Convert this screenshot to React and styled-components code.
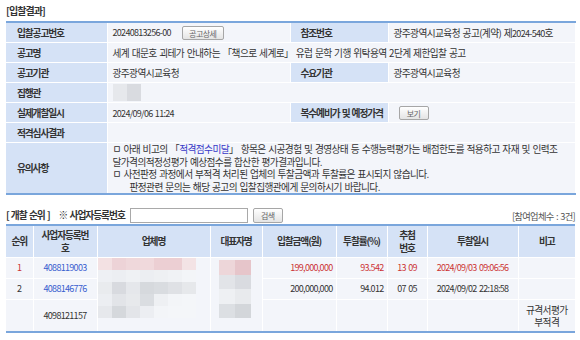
import React from "react";
import styled, { createGlobalStyle } from "styled-components";

const GlobalStyle = createGlobalStyle`
    html, body {
        margin: 0;
        padding: 0;
        background: #ffffff;
    }
    body {
        font-family: "Noto Sans CJK KR", "Noto Sans", sans-serif;
        font-size: 9.7px;
        letter-spacing: -0.6px;
        word-spacing: 1px;
        color: #333;
    }
`;

// mosaic colours used to hide names (same as the blurred blocks in the page)
const nameMosaic = [
    ["#f3e1e3", "#edd3d7", "#efd8db", "#f0d9dc", "#eccfd3", "#eccfd3", "#f3e3e5"],
    ["#eef0f4", "#eceef2", "#eff1f4", "#eceef2", "#eef0f3", "#f0f2f5", "#f3f5f8"],
    ["#e9ebee", "#d8dadf", "#e5e7eb", "#d6d9dd", "#d9dce0", "#dfe1e5", "#e6e8eb"],
    ["#eceef2", "#e2e4e8", "#e7e9ec", "#dadde1", "#eef0f3", "#f3f5f8", "#f4f6f9"],
    ["#e6e8ec", "#d5d8dc", "#e3e5e9", "#eceef2", "#f3f5f8", "#f4f6f9", "#f4f6f9"],
];

const repMosaic = [
    ["#edd6d9", "#e6c5ca"],
    ["#e2e4e8", "#d9dbe0"],
    ["#eef0f3", "#e8eaed"],
    ["#dcdfe3", "#d3d6da"],
];

const bids = [
    { rank: "1", bizNo: "4088119003", link: true, amount: "199,000,000", rate: "93.542", draw: "13 09", date: "2024/09/03 09:06:56", note: "", hot: true },
    { rank: "2", bizNo: "4088146776", link: true, amount: "200,000,000", rate: "94.012", draw: "07 05", date: "2024/09/02 22:18:58", note: "" },
    { rank: "", bizNo: "4098121157", link: false, amount: "", rate: "", draw: "", date: "", note: "규격서평가\n부적격", tall: true },
];

const Mosaic = ({ data, cell, rowH }) => (
    <MosaicGrid $cols={data[0].length} $cell={cell} $rowH={rowH}>
        {data.flat().map((c, i) => (
            <MosaicCell key={i} $c={c} />
        ))}
    </MosaicGrid>
);

const App = () => {
    return (
        <Page>
            <GlobalStyle />
            <Title>[입찰결과]</Title>

            {/* 입찰결과 정보 */}
            <InfoTable>
                <colgroup>
                    <col style={{ width: 101 }} />
                    <col style={{ width: 183 }} />
                    <col style={{ width: 98 }} />
                    <col style={{ width: 187 }} />
                </colgroup>
                <tbody>
                    <tr>
                        <Th>입찰공고번호</Th>
                        <Td>
                            <Num>20240813256-00</Num>
                            <SmallButton $w={42} $ml={11}>공고상세</SmallButton>
                        </Td>
                        <Th $pl={10}>참조번호</Th>
                        <Td>광주광역시교육청 공고(계약) 제<Num>2024-540</Num>호</Td>
                    </tr>
                    <tr>
                        <Th>공고명</Th>
                        <Td colSpan={3}>
                            세계 대문호 괴테가 안내하는 「책으로 세계로」 유럽 문학 기행 위탁용역 2단계 제한입찰 공고
                        </Td>
                    </tr>
                    <tr>
                        <Th>공고기관</Th>
                        <Td>광주광역시교육청</Td>
                        <Th $pl={10}>수요기관</Th>
                        <Td>광주광역시교육청</Td>
                    </tr>
                    <tr>
                        <Th>집행관</Th>
                        <Td colSpan={3}>
                            <Mosaic data={[["#e6e8ec", "#d9dbe0"]]} cell={14} rowH={17} />
                        </Td>
                    </tr>
                    <tr>
                        <Th>실제개찰일시</Th>
                        <Td><Num>2024/09/06 11:24</Num></Td>
                        <Th $pl={10}>복수예비가 및 예정가격</Th>
                        <Td>
                            <SmallButton $w={30} $ml={5}>보기</SmallButton>
                        </Td>
                    </tr>
                    <tr>
                        <Th>적격심사결과</Th>
                        <Td colSpan={3}></Td>
                    </tr>
                    <tr>
                        <Th $h={50}>유의사항</Th>
                        <Td colSpan={3}>
                            <Notice>
                                <div>ㅁ 아래 비고의 「<Highlight>적격점수미달</Highlight>」 항목은 시공경험 및 경영상태 등 수행능력평가는 배점한도를 적용하고 자재 및 인력조</div>
                                <div>달가격의적정성평가 예상점수를 합산한 평가결과입니다.</div>
                                <div>ㅁ 사전판정 과정에서 부적격 처리된 업체의 투찰금액과 투찰률은 표시되지 않습니다.</div>
                                <Indent>판정관련 문의는 해당 공고의 입찰집행관에게 문의하시기 바랍니다.</Indent>
                            </Notice>
                        </Td>
                    </tr>
                </tbody>
            </InfoTable>

            {/* 개찰 순위 검색줄 */}
            <SearchBar>
                <SectionLabel>[ 개찰 순위 ]</SectionLabel>
                <SectionLabel $ml={9}>※ 사업자등록번호</SectionLabel>
                <SearchInput />
                <SmallButton $w={30} $ml={5} $h={15}>검색</SmallButton>
                <Count>[참여업체수 : 3건]</Count>
            </SearchBar>

            <RankTable>
                <colgroup>
                    <col style={{ width: 27 }} />
                    <col style={{ width: 64 }} />
                    <col style={{ width: 113 }} />
                    <col style={{ width: 52 }} />
                    <col style={{ width: 74 }} />
                    <col style={{ width: 51 }} />
                    <col style={{ width: 40 }} />
                    <col style={{ width: 91 }} />
                    <col style={{ width: 57 }} />
                </colgroup>
                <thead>
                    <tr>
                        <HeadCell>순위</HeadCell>
                        <HeadCell>사업자등록번<br />호</HeadCell>
                        <HeadCell>업체명</HeadCell>
                        <HeadCell>대표자명</HeadCell>
                        <HeadCell>입찰금액(원)</HeadCell>
                        <HeadCell>투찰률(%)</HeadCell>
                        <HeadCell>추첨<br />번호</HeadCell>
                        <HeadCell>투찰일시</HeadCell>
                        <HeadCell>비고</HeadCell>
                    </tr>
                </thead>
                <tbody>
                    {bids.map((b, i) => (
                        <tr key={i}>
                            <Cell $num $hot={b.hot} $h={b.tall ? 31 : 20}>{b.rank}</Cell>
                            <Cell $num $hot={b.hot}>
                                {b.link ? <BizLink>{b.bizNo}</BizLink> : b.bizNo}
                            </Cell>
                            {i === 0 && (
                                <MosaicCellTd rowSpan={3}>
                                    <Mosaic data={nameMosaic} cell={14} rowH={12} />
                                </MosaicCellTd>
                            )}
                            {i === 0 && (
                                <MosaicCellTd rowSpan={3} $center>
                                    <Mosaic data={repMosaic} cell={16} rowH={14.5} />
                                </MosaicCellTd>
                            )}
                            <Cell $num $hot={b.hot} $align="right">{b.amount}</Cell>
                            <Cell $num $hot={b.hot} $align="right">{b.rate}</Cell>
                            <Cell $num $hot={b.hot}>{b.draw}</Cell>
                            <Cell $num $hot={b.hot}>{b.date}</Cell>
                            <Cell $pre>{b.note}</Cell>
                        </tr>
                    ))}
                </tbody>
            </RankTable>
        </Page>
    );
};

export default App;

const Page = styled.div`
    width: 569px;
    padding: 0 5px 0 6px;
`;

const Title = styled.div`
    height: 20px;
    padding-top: 4px;
    box-sizing: border-box;
    font-weight: bold;
    font-size: 10px;
    letter-spacing: -0.9px;
    line-height: 13px;
    color: #333;
`;

const Num = styled.span`
    font-size: 9px;
    letter-spacing: -0.7px;
`;

const InfoTable = styled.table`
    width: 569px;
    table-layout: fixed;
    border-collapse: collapse;
    border-top: 2px solid #7aa6dc;
    border-bottom: 2px solid #7aa6dc;
    margin-top: 1px;
`;

const Th = styled.th`
    height: ${(p) => p.$h || 19}px;
    padding: 0 0 0 ${(p) => p.$pl || 11}px;
    background: #d5e2f6;
    border-bottom: 1px solid #ffffff;
    border-right: 1px solid #ffffff;
    text-align: left;
    font-weight: bold;
    letter-spacing: -1.1px;
    color: #333;
    white-space: nowrap;
`;

const Td = styled.td`
    padding: 0 4px 0 5px;
    background: #f3f5fa;
    border-bottom: 1px solid #ffffff;
    border-right: 1px solid #ffffff;
    color: #333;
    white-space: nowrap;
    vertical-align: middle;
`;

const SmallButton = styled.button`
    width: ${(p) => p.$w}px;
    height: ${(p) => p.$h || 14}px;
    margin-left: ${(p) => p.$ml || 0}px;
    padding: 0;
    font-family: inherit;
    font-size: 8px;
    letter-spacing: -0.5px;
    color: #666;
    background: linear-gradient(#ffffff, #e4e4e4);
    border: 1px solid #a6a6a6;
    border-radius: 2px;
    vertical-align: middle;
`;

const Notice = styled.div`
    line-height: 12.5px;
`;

const Indent = styled.div`
    padding-left: 17px;
`;

const Highlight = styled.span`
    color: #3838c8;
`;

const SearchBar = styled.div`
    display: flex;
    align-items: center;
    height: 16px;
    margin-top: 12px;
    margin-bottom: 1px;
`;

const SectionLabel = styled.span`
    margin-left: ${(p) => p.$ml || 0}px;
    font-weight: bold;
    letter-spacing: -1px;
    color: #333;
`;

const SearchInput = styled.input`
    width: 118px;
    height: 15px;
    box-sizing: border-box;
    margin-left: 5px;
    border: 1px solid #a9a9a9;
    background: #fff;
    padding: 0;
`;

const Count = styled.span`
    margin-left: auto;
    align-self: flex-end;
    color: #555;
    letter-spacing: -0.7px;
    font-size: 9.3px;
`;

const RankTable = styled.table`
    width: 569px;
    table-layout: fixed;
    border-collapse: collapse;
    border-top: 2px solid #7aa6dc;
    border-bottom: 2px solid #7aa6dc;
`;

const HeadCell = styled.th`
    height: 31px;
    padding: 0;
    background: #d5e2f6;
    border-right: 1px solid #ffffff;
    border-bottom: 1px solid #ffffff;
    font-weight: bold;
    letter-spacing: -1.1px;
    line-height: 13px;
    color: #333;
    text-align: center;
    &:last-child {
        border-right: none;
    }
`;

const Cell = styled.td`
    height: ${(p) => p.$h || 19}px;
    padding: 0 3px;
    background: #f3f5fa;
    border-right: 1px solid #ffffff;
    border-bottom: 1px solid #ffffff;
    text-align: ${(p) => p.$align || "center"};
    color: ${(p) => (p.$hot ? "#cc3333" : "#333")};
    white-space: ${(p) => (p.$pre ? "pre-line" : "nowrap")};
    font-size: ${(p) => (p.$num ? "9px" : "inherit")};
    letter-spacing: ${(p) => (p.$num ? "-0.7px" : "inherit")};
    line-height: 12px;
    &:last-child {
        border-right: none;
    }
`;

const MosaicCellTd = styled.td`
    padding: ${(p) => (p.$center ? "2px 0 0 8px" : "0")};
    background: #f3f5fa;
    border-right: 1px solid #ffffff;
    vertical-align: top;
`;

const BizLink = styled.a`
    color: #3a5ecf;
    text-decoration: none;
`;

const MosaicGrid = styled.div`
    display: grid;
    grid-template-columns: repeat(${(p) => p.$cols}, ${(p) => p.$cell}px);
    grid-auto-rows: ${(p) => p.$rowH}px;
    filter: blur(0.6px);
`;

const MosaicCell = styled.div`
    background: ${(p) => p.$c};
`;
